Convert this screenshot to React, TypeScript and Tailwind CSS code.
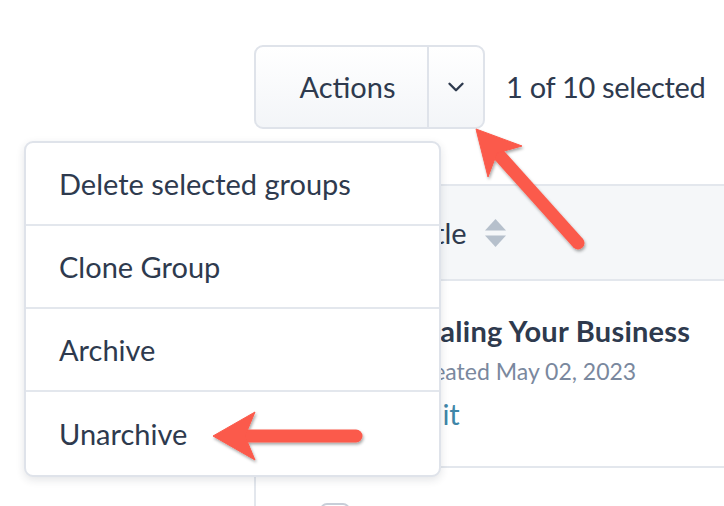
import { ChevronDown } from "lucide-react";

const MENU_ITEMS = ["Delete selected groups", "Clone Group", "Archive", "Unarchive"];

function SortIcon() {
  return (
    <svg width="21" height="28" viewBox="0 0 21 28" className="ml-[18px]">
      <path d="M10.5 0 L21 11.5 L0 11.5 Z" fill="#b6c0cc" />
      <path d="M10.5 28 L21 16.5 L0 16.5 Z" fill="#b6c0cc" />
    </svg>
  );
}

function Checkbox({ checked = false }: { checked?: boolean }) {
  return (
    <div
      className={
        "w-[30px] h-[30px] rounded-[7px] border-2 " +
        (checked ? "bg-[#3b82a6] border-[#3b82a6]" : "bg-white border-[#c7ced8]")
      }
    />
  );
}

function Arrows() {
  return (
    <svg
      className="absolute left-0 top-0 pointer-events-none"
      width="724"
      height="506"
      viewBox="0 0 724 506"
    >
      <defs>
        <filter id="shadow" x="-20%" y="-20%" width="140%" height="140%">
          <feDropShadow dx="1" dy="2" stdDeviation="1.6" floodColor="#000" floodOpacity="0.35" />
        </filter>
      </defs>
      <g filter="url(#shadow)" fill="#fb5a4b" stroke="#fb5a4b">
        {/* arrow to the dropdown toggle */}
        <line x1="578" y1="243" x2="500" y2="156" strokeWidth="13" strokeLinecap="round" />
        <polygon points="476,129 522,146 497,153 488,177" strokeWidth="1" strokeLinejoin="round" />
        {/* arrow to Unarchive */}
        <line x1="356" y1="436" x2="248" y2="436" strokeWidth="13" strokeLinecap="round" />
        <polygon points="213,436 255,412 245,436 255,460" strokeWidth="1" strokeLinejoin="round" />
      </g>
    </svg>
  );
}

export default function App() {
  return (
    <div className="relative w-[724px] h-[506px] overflow-hidden bg-white text-[#2e3a4e] font-['Source_Sans_Pro','Lato',sans-serif] text-[29px]">
      {/* toolbar */}
      <div className="flex items-center pl-[254px] pt-[45px]">
        <div className="flex h-[84px] rounded-[9px] border-2 border-[#dfe3ea] bg-gradient-to-b from-white to-[#f3f5f8]">
          <div className="w-[171px] flex items-center justify-center pl-[12px]">Actions</div>
          <div className="w-[56px] flex items-center justify-center border-l-2 border-[#dfe3ea]">
            <ChevronDown size={26} strokeWidth={2.2} />
          </div>
        </div>
        <span className="ml-[21px] tracking-[-0.3px]">1 of 10 selected</span>
      </div>

      {/* table */}
      <div className="ml-[254px] mt-[55px] w-[520px] border-l-2 border-t-2 border-[#e3e7ed]">
        <div className="flex items-center h-[95px] bg-[#f5f7f9] border-b-2 border-[#e3e7ed]">
          <div className="w-[154px] flex justify-center pl-[4px]">
            <Checkbox />
          </div>
          <div className="flex items-center">
            <span>Title</span>
            <SortIcon />
          </div>
        </div>
        <div className="flex h-[187px] border-b-2 border-[#e3e7ed]">
          <div className="w-[154px] flex justify-center pl-[4px] pt-[38px]">
            <Checkbox checked />
          </div>
          <div className="flex flex-col pt-[31px]">
            <span className="font-bold leading-[38px] tracking-[0.25px]">Scaling Your Business</span>
            <span className="text-[#7a889e] text-[23px] leading-[42px]">Created May 02, 2023</span>
            <span className="text-[#3f86a8] leading-[44px]">Edit</span>
          </div>
        </div>
        <div className="flex h-[100px]">
          <div className="w-[154px] flex justify-center pl-[4px] pt-[35px]">
            <Checkbox />
          </div>
        </div>
      </div>

      {/* dropdown menu */}
      <div className="absolute left-[24px] top-[141px] w-[417px] rounded-[9px] border-2 border-[#dfe3ea] bg-white shadow-[0_3px_8px_rgba(30,40,60,0.12)]">
        {MENU_ITEMS.map((item, i) => (
          <div
            key={item}
            className={
              "h-[83px] flex items-center pl-[33px] " +
              (i < MENU_ITEMS.length - 1 ? "border-b-2 border-[#e3e7ed]" : "")
            }
          >
            {item}
          </div>
        ))}
      </div>

      <Arrows />
    </div>
  );
}
